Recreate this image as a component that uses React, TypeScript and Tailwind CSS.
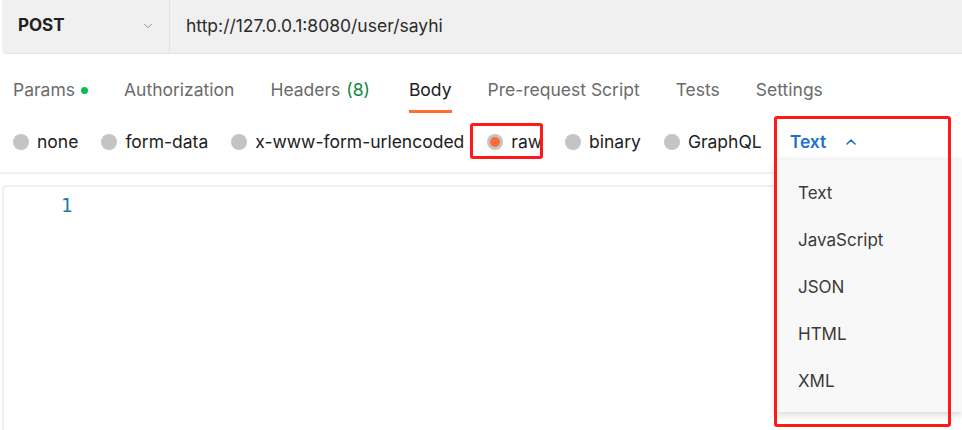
import React from 'react';
import { ChevronDown, ChevronUp } from 'lucide-react';

const tabs = [
  { label: 'Params', dot: true, ml: 'ml-[13px]' },
  { label: 'Authorization', ml: 'ml-[36px]' },
  { label: 'Headers', count: '(8)', ml: 'ml-[36px]' },
  { label: 'Body', active: true, ml: 'ml-[39px]' },
  { label: 'Pre-request Script', ml: 'ml-[36px]' },
  { label: 'Tests', ml: 'ml-[36px]' },
  { label: 'Settings', ml: 'ml-[36px]' },
];

const bodyTypes = ['none', 'form-data', 'x-www-form-urlencoded', 'raw', 'binary', 'GraphQL'];

const languages = ['Text', 'JavaScript', 'JSON', 'HTML', 'XML'];

const Radio = ({ checked }: { checked?: boolean }) => (
  <span className="w-4 h-4 rounded-full bg-[#c4c4c4] flex items-center justify-center shrink-0">
    {checked && <span className="w-[10px] h-[10px] rounded-full bg-[#ff6c37]" />}
  </span>
);

export default function App() {
  return (
    <div className="relative w-[962px] h-[430px] overflow-hidden bg-white font-['Inter',sans-serif]">
      {/* URL bar */}
      <div className="ml-[2px] h-[54px] bg-[#f0f0f0] border-b border-[#e2e2e2] rounded-bl-[5px] flex">
        <div className="w-[168px] flex items-center justify-between pl-[16px] pr-[14px] pb-[1px] border-r border-[#e4e4e4]">
          <span className="text-[17px] font-bold text-[#212121]">POST</span>
          <ChevronDown className="w-[14px] h-[14px] text-[#8a8a8a]" strokeWidth={1.6} />
        </div>
        <div className="flex items-center pl-[16px] pb-[1px] text-[17.5px] text-[#2b2b2b]">
          http://127.0.0.1:8080/user/sayhi
        </div>
      </div>

      {/* Tabs */}
      <div className="flex mt-[24px] h-[35px]">
        {tabs.map((t) => (
          <div key={t.label} className={`${t.ml} flex flex-col`}>
            <div className="flex items-center h-[24px] text-[17.5px] leading-[24px]">
              <span className={t.active ? 'text-[#212121]' : 'text-[#6b6b6b]'}>{t.label}</span>
              {t.count && <span className="ml-[6px] text-[#0d8a3e]">{t.count}</span>}
              {t.dot && <span className="ml-[6px] w-[7px] h-[7px] rounded-full bg-[#0cbb52]" />}
            </div>
            {t.active && <div className="mt-[8px] h-[3px] bg-[#ff6c37]" />}
          </div>
        ))}
      </div>

      {/* Body types */}
      <div className="flex items-center h-[34px] mt-[12px] pl-[13px] text-[17.5px] text-[#212121]">
        {bodyTypes.map((b, i) => (
          <div key={b} className={`flex items-center gap-[8px] ${i === 0 ? '' : 'ml-[23px]'}`}>
            <Radio checked={b === 'raw'} />
            <span>{b}</span>
          </div>
        ))}
        <div className="ml-[28px] flex items-center gap-[17px] text-[#1f6fd6] font-semibold">
          <span>Text</span>
          <ChevronUp className="w-[16px] h-[16px]" strokeWidth={2.4} />
        </div>
      </div>

      <div className="mt-[13px] h-[2px] bg-[#f2f2f2]" />

      {/* Editor */}
      <div className="mt-[11px] ml-[2px] h-[260px] border-l-2 border-t-2 border-[#f0f0f0] rounded-tl-[4px]">
        <div className="pl-[57px] pt-[4px] font-['DejaVu_Sans_Mono',monospace] text-[19px] text-[#1c7ba1]">1</div>
      </div>

      {/* Language dropdown */}
      <div className="absolute left-[776px] top-[160px] w-[186px] h-[252px] bg-[#f8f8f8] shadow-[0_2px_8px_rgba(0,0,0,0.18)] pt-[20px]">
        {languages.map((l) => (
          <div key={l} className="h-[47px] pl-[22px] text-[17px] leading-[26px] text-[#3a3a3a]">
            {l}
          </div>
        ))}
      </div>

      {/* Annotation boxes */}
      <div className="absolute left-[470px] top-[123px] w-[73px] h-[36px] border-[3px] border-[#ff1a1a] rounded-[3px]" />
      <div className="absolute left-[774px] top-[116px] w-[177px] h-[311px] border-[3px] border-[#ff1a1a] rounded-[3px]" />
    </div>
  );
}
